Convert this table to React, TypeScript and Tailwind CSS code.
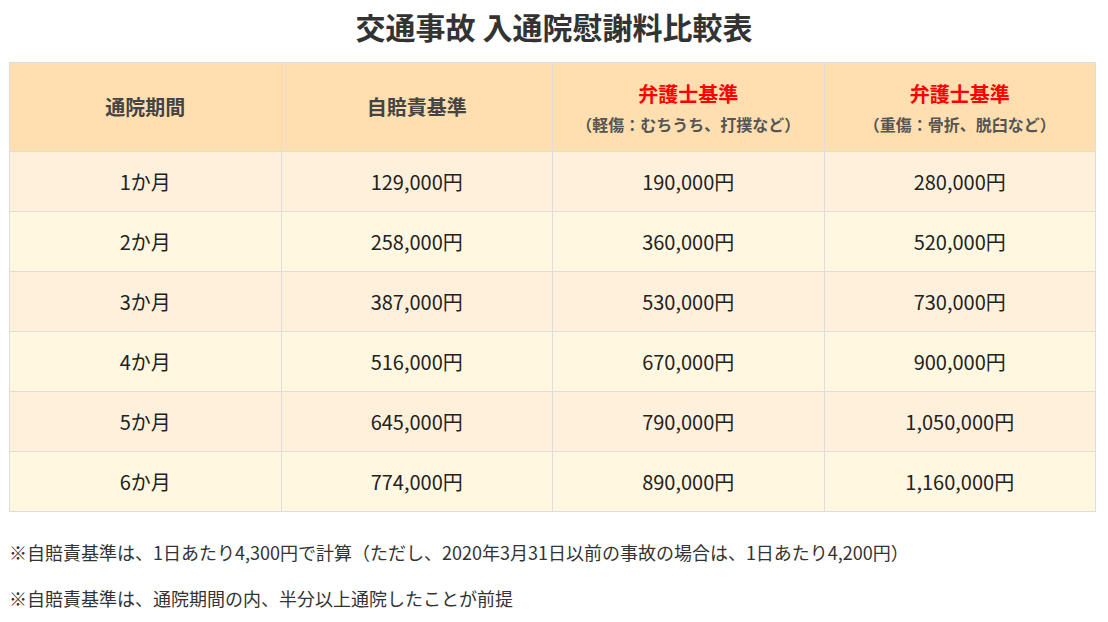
const rows = [
  ["1か月", "129,000円", "190,000円", "280,000円"],
  ["2か月", "258,000円", "360,000円", "520,000円"],
  ["3か月", "387,000円", "530,000円", "730,000円"],
  ["4か月", "516,000円", "670,000円", "900,000円"],
  ["5か月", "645,000円", "790,000円", "1,050,000円"],
  ["6か月", "774,000円", "890,000円", "1,160,000円"],
];

const font = { fontFamily: '"Noto Sans CJK JP", "Noto Sans", sans-serif' };

export default function App() {
  return (
    <div className="min-h-[622px] bg-white px-[9px] pt-[6px] text-[#333]" style={font}>
      <h1 className="text-center text-[30px] font-bold leading-[40px] text-[#333]">交通事故 入通院慰謝料比較表</h1>

      <table className="mt-[16px] w-[1087px] table-fixed border-collapse border border-[#ddd] text-center">
        <thead>
          <tr className="h-[89px] bg-[#ffdfb0]">
            <th className="border border-[#ddd] text-[20px] font-bold text-[#444]">通院期間</th>
            <th className="border border-[#ddd] text-[20px] font-bold text-[#444]">自賠責基準</th>
            <th className="border border-[#ddd] font-bold">
              <div className="text-[20px] leading-[28px] text-[#ff0000]">弁護士基準</div>
              <div className="mt-[5px] text-[16px] leading-[22px] text-[#555]">（軽傷：むちうち、打撲など）</div>
            </th>
            <th className="border border-[#ddd] font-bold">
              <div className="text-[20px] leading-[28px] text-[#ff0000]">弁護士基準</div>
              <div className="mt-[5px] text-[16px] leading-[22px] text-[#555]">（重傷：骨折、脱臼など）</div>
            </th>
          </tr>
        </thead>
        <tbody>
          {rows.map((row, i) => (
            <tr key={row[0]} className={`h-[60px] ${i % 2 === 0 ? "bg-[#fff0dc]" : "bg-[#fff7df]"}`}>
              {row.map((cell, j) => (
                <td key={j} className="border border-[#ddd] text-[20px] text-[#222]">
                  {cell}
                </td>
              ))}
            </tr>
          ))}
        </tbody>
      </table>

      <p className="mt-[28px] text-[18px] leading-[24px] text-[#333]">
        ※自賠責基準は、1日あたり4,300円で計算（ただし、2020年3月31日以前の事故の場合は、1日あたり4,200円）
      </p>
      <p className="mt-[22px] text-[18px] leading-[24px] text-[#333]">※自賠責基準は、通院期間の内、半分以上通院したことが前提</p>
    </div>
  );
}
